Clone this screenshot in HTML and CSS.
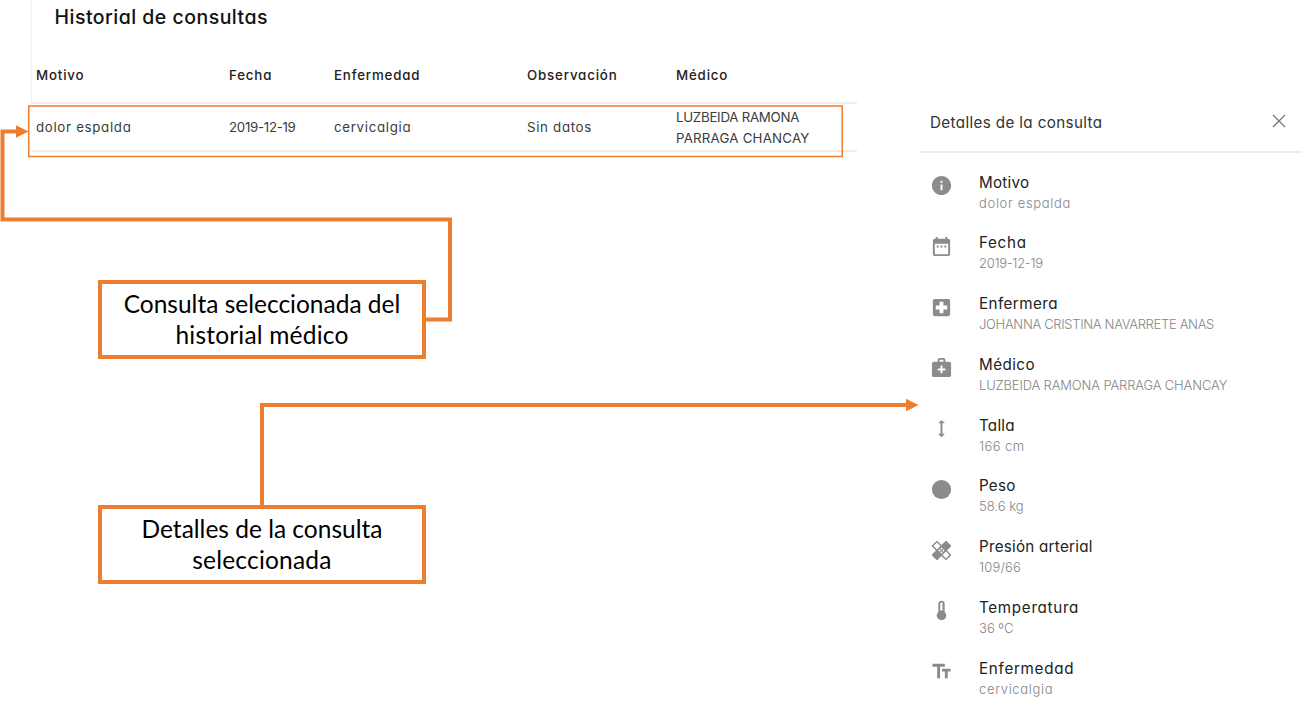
FILE: index.html
```html
<!DOCTYPE html>
<html lang="es">
<head>
<meta charset="utf-8">
<title>Historial de consultas</title>
<link rel="stylesheet" href="styles.css">
</head>
<body>
<div class="page">
  <main class="history">
    <h1 class="history-title">Historial de consultas</h1>
    <div class="row head">
      <span>Motivo</span><span>Fecha</span><span>Enfermedad</span><span>Observación</span><span>Médico</span>
    </div>
    <div class="row data">
      <span class="loose">dolor espalda</span><span class="date">2019-12-19</span><span class="loose">cervicalgia</span><span class="loose">Sin datos</span><span class="doctor"><span class="tight">LUZBEIDA RAMONA</span><br>PARRAGA CHANCAY</span>
    </div>
  </main>

  <aside class="details">
    <header class="details-head">
      <h2>Detalles de la consulta</h2>
      <svg class="close" viewBox="0 0 14 14"><path d="M1 1l12 12M13 1L1 13"/></svg>
    </header>
    <ul class="items">
      <li>
        <svg class="icon" viewBox="0 0 24 24"><path d="M12 2C6.48 2 2 6.48 2 12s4.480 10 10 10 10-4.480 10-10S17.520 2 12 2zm1 15h-2v-6h2v6zm0-8h-2V7h2v2z"/></svg>
        <div><h3 class="snug">Motivo</h3><p class="loose">dolor espalda</p></div>
      </li>
      <li>
        <svg class="icon" viewBox="0 0 24 24"><path d="M9 11H7v2h2v-2zm4 0h-2v2h2v-2zm4 0h-2v2h2v-2zm2-7h-1V2h-2v2H8V2H6v2H5c-1.110 0-1.990.9-1.990 2L3 20c0 1.100.89 2 2 2h14c1.100 0 2-.9 2-2V6c0-1.100-.9-2-2-2zm0 16H5V9h14v11z"/></svg>
        <div><h3 class="wide">Fecha</h3><p class="date">2019-12-19</p></div>
      </li>
      <li>
        <svg class="icon" viewBox="0 0 24 24"><path d="M19 3H5c-1.100 0-1.990.9-1.990 2L3 19c0 1.100.9 2 2 2h14c1.100 0 2-.9 2-2V5c0-1.100-.9-2-2-2zm-1 11h-4v4h-4v-4H6v-4h4V6h4v4h4v4z"/></svg>
        <div><h3>Enfermera</h3><p class="nurse">JOHANNA CRISTINA NAVARRETE ANAS</p></div>
      </li>
      <li>
        <svg class="icon" viewBox="0 0 24 24"><path d="M20 6h-4V4c0-1.100-.9-2-2-2h-4c-1.100 0-2 .9-2 2v2H4c-1.100 0-2 .9-2 2v12c0 1.100.9 2 2 2h16c1.100 0 2-.9 2-2V8c0-1.100-.9-2-2-2zM10 4h4v2h-4V4zm6 11h-3v3h-2v-3H8v-2h3v-3h2v3h3v2z"/></svg>
        <div><h3>Médico</h3><p class="physician">LUZBEIDA RAMONA PARRAGA CHANCAY</p></div>
      </li>
      <li>
        <svg class="icon" viewBox="0 0 24 24"><path d="M13 6.500h2.500L12 3 8.500 6.500H11v11H8.500L12 21l3.500-3.500H13z"/></svg>
        <div><h3 class="snug">Talla</h3><p class="height">166 cm</p></div>
      </li>
      <li>
        <svg class="icon" viewBox="0 0 24 24"><circle cx="12" cy="12" r="10"/></svg>
        <div><h3 class="snug">Peso</h3><p>58.6 kg</p></div>
      </li>
      <li>
        <svg class="icon" viewBox="0 0 24 24"><path d="M17.730 12.020l3.980-3.980c.39-.39.39-1.020 0-1.410l-4.340-4.340c-.39-.39-1.020-.39-1.410 0l-3.980 3.980L8 2.290C7.610 1.900 7 1.900 6.600 2.290L2.250 6.630c-.39.39-.39 1.020 0 1.410l3.980 3.980L2.250 16c-.39.39-.39 1.020 0 1.410l4.340 4.340c.39.39 1.020.39 1.410 0l3.980-3.980 3.980 3.980c.2.2.45.29.71.29.26 0 .51-.1.71-.29l4.340-4.340c.39-.39.39-1.020 0-1.410l-3.990-3.980zM12 9c.55 0 1 .45 1 1s-.45 1-1 1-1-.45-1-1 .45-1 1-1zm-4.710 1.960L3.660 7.340l3.630-3.630 3.620 3.620-3.620 3.630zM10 13c-.55 0-1-.45-1-1s.45-1 1-1 1 .45 1 1-.45 1-1 1zm2 2c-.55 0-1-.45-1-1s.45-1 1-1 1 .45 1 1-.45 1-1 1zm2-4c.55 0 1 .45 1 1s-.45 1-1 1-1-.45-1-1 .45-1 1-1zm2.660 9.340l-3.630-3.620 3.630-3.630 3.620 3.620-3.620 3.630z"/></svg>
        <div><h3 class="snug">Presión arterial</h3><p class="pressure">109/66</p></div>
      </li>
      <li>
        <svg class="icon" viewBox="0 0 24 24"><path fill-rule="evenodd" d="M15.300 13.500V5a3.300 3.300 0 0 0-6.600 0v8.500a5 5 0 1 0 6.600 0zM10.700 5a1.300 1.300 0 0 1 2.600 0v1h-1v1h1v2h-1v1h1v2h-2.600z"/></svg>
        <div><h3 class="wide">Temperatura</h3><p>36 ºC</p></div>
      </li>
      <li>
        <svg class="icon" viewBox="0 0 24 24"><path d="M2.500 4v3h5v12h3V7h5V4h-13zm19 5h-9v3h3v7h3v-7h3V9z"/></svg>
        <div><h3 class="wide">Enfermedad</h3><p class="loose">cervicalgia</p></div>
      </li>
    </ul>
  </aside>

  <svg class="connectors" viewBox="0 0 1302 704">
    <rect class="highlight" x="28.750" y="106" width="813.500" height="50.500"/>
    <path class="line" d="M426 319.500H450V219.500H2.500V131.500H17"/>
    <path class="tip" d="M16 125.300L28.500 131.500L16 137.700z"/>
    <path class="line" d="M262 507V405H907"/>
    <path class="tip" d="M906 398.800L918.500 405L906 411.200z"/>
  </svg>
  <div class="callout callout-row"><span>Consulta seleccionada del</span><span class="spaced">historial médico</span></div>
  <div class="callout callout-details"><span>Detalles de la consulta</span><span class="spaced">seleccionada</span></div>
</div>
</body>
</html>
```
FILE: styles.css
```css
* { box-sizing: border-box; }
body { margin: 0; background: #fff; overflow: hidden; }
h1, h2, h3, p, ul { margin: 0; padding: 0; font-weight: 400; }
.page {
  position: relative;
  width: 1302px;
  height: 704px;
  display: grid;
  grid-template-columns: 826px 383px;
  column-gap: 62px;
  padding-left: 31px;
  font-family: Inter, sans-serif;
  font-feature-settings: "cv11";
  color: #333;
}

.history-title {
  height: 49px;
  padding: 3px 0 0 22.5px;
  border-left: 1px solid #f3f3f3;
  font-size: 19.5px;
  line-height: 28px;
  font-weight: 500;
  letter-spacing: .48px;
  color: #111;
}
.row {
  display: grid;
  grid-template-columns: 193px 105px 193px 149px 1fr;
  align-items: center;
  padding-left: 5px;
  font-size: 13.3px;
  line-height: 21px;
}
.head {
  height: 55px;
  border-bottom: 2px solid #eeeef0;
  border-left: 1px solid #f3f3f3;
  padding-left: 4px;
  font-weight: 500;
  color: #222;
  letter-spacing: .83px;
}
.data { height: 48px; border-bottom: 2px solid #eeeef0; color: #3c3c3c; }
.doctor { padding-top: 1px; letter-spacing: .2px; }
.tight { letter-spacing: -.27px; }
.loose { letter-spacing: .68px; }
.date { letter-spacing: -.3px; }

.details { padding-top: 92px; }
.details-head {
  height: 61px;
  display: flex;
  align-items: center;
  justify-content: space-between;
  padding: 0 16px 2px 11px;
  border-bottom: 2px solid #ececec;
}
.details-head h2 { padding-top: 3px; font-size: 15.2px; letter-spacing: .37px; }
.close { width: 14px; height: 14px; fill: none; stroke: #777; stroke-width: 1.3; }
.items { list-style: none; padding: 18.5px 0 0 10.5px; }
.items li { display: flex; height: 60.75px; gap: 26.5px; }
.icon { width: 23px; height: 23px; margin-top: 2.5px; fill: #8b8b8b; flex: none; }
.items h3 { font-size: 15.2px; line-height: 21px; color: #222; letter-spacing: .43px; }
.items .snug { letter-spacing: .25px; }
.items .wide { letter-spacing: .7px; }
.items p { font-size: 13px; line-height: 21px; color: #858585; font-weight: 300; }
.nurse { letter-spacing: -.32px; }
.physician { letter-spacing: -.15px; }
.height { letter-spacing: .4px; }
.pressure { letter-spacing: .15px; }

.connectors { position: absolute; inset: 0; width: 1302px; height: 704px; }
.highlight { fill: none; stroke: #ed7d31; stroke-width: 1.5; }
.line { fill: none; stroke: #ed7d31; stroke-width: 4; }
.tip { fill: #ed7d31; }
.callout {
  position: absolute;
  left: 98px;
  width: 328px;
  height: 79px;
  display: flex;
  flex-direction: column;
  align-items: center;
  justify-content: center;
  padding-bottom: 1px;
  border: 4px solid #ed7d31;
  background: #fff;
  font-family: Lato, sans-serif;
  font-size: 24.5px;
  line-height: 31.5px;
  color: #000;
  white-space: nowrap;
}
.callout-row { top: 280px; }
.callout-details { top: 505px; }
.spaced { letter-spacing: .2px; }
```
